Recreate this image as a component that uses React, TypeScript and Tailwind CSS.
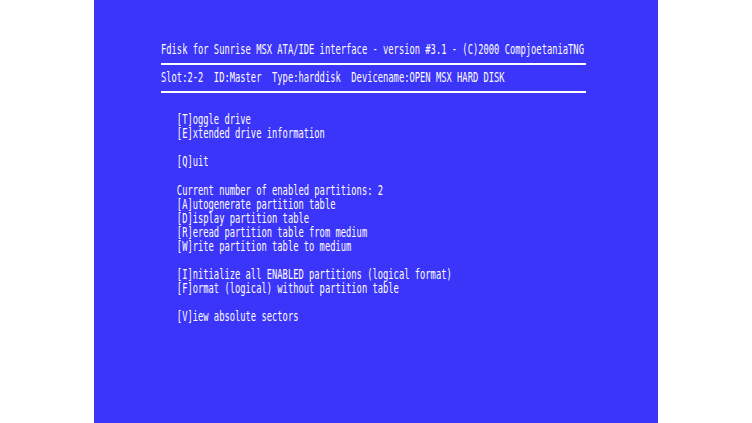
const lines: (string | null | "rule")[] = [
  "Fdisk for Sunrise MSX ATA/IDE interface - version #3.1 - (C)2000 CompjoetaniaTNG",
  "rule",
  "Slot:2-2  ID:Master  Type:harddisk  Devicename:OPEN MSX HARD DISK",
  "rule",
  null,
  "   [T]oggle drive",
  "   [E]xtended drive information",
  null,
  "   [Q]uit",
  null,
  "   Current number of enabled partitions: 2",
  "   [A]utogenerate partition table",
  "   [D]isplay partition table",
  "   [R]eread partition table from medium",
  "   [W]rite partition table to medium",
  null,
  "   [I]nitialize all ENABLED partitions (logical format)",
  "   [F]ormat (logical) without partition table",
  null,
  "   [V]iew absolute sectors",
];

const App = () => {
  return (
    <div className="flex h-[423px] w-[752px] bg-white">
      <div className="ml-[94px] h-full w-[564px] bg-[#3b34f9] pl-[67px] pt-[43px]">
        {lines.map((line, i) => {
          if (line === "rule") {
            return (
              <div key={i} className="flex h-[14.1px] items-center">
                <div className="h-[2px] w-[425px] bg-white" />
              </div>
            );
          }
          return (
            <div key={i} className="flex h-[14.1px] items-center">
              {line && (
                <span className="inline-block origin-center scale-y-[1.5] whitespace-pre font-['DejaVu_Sans_Mono',monospace] text-[8.79px] leading-none text-white">
                  {line}
                </span>
              )}
            </div>
          );
        })}
      </div>
    </div>
  );
};

export default App;
